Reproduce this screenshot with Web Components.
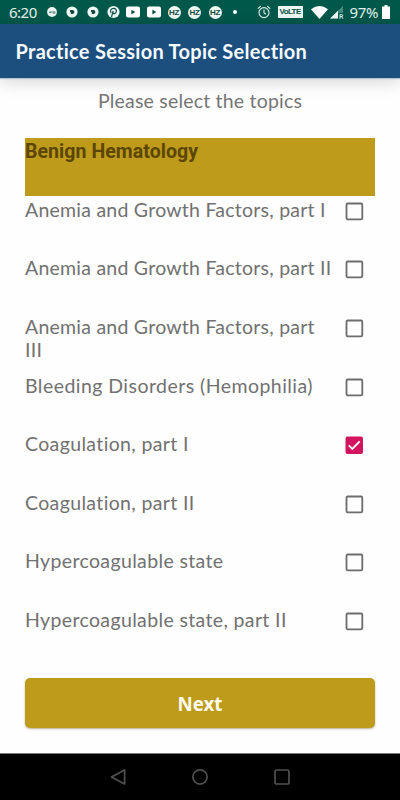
<!DOCTYPE html>
<html lang="en">
<head>
<meta charset="utf-8">
<meta name="viewport" content="width=device-width, initial-scale=1">
<title>Practice Session Topic Selection</title>
<style>
  html, body {
    margin: 0;
    height: 100%;
    overflow: hidden;
    background: #fefefe;
    font-family: Lato, "Noto Sans", sans-serif;
    font-variant-ligatures: none;
  }
</style>
</head>
<body>
<topic-screen></topic-screen>

<script>
class StatusBar extends HTMLElement {
  constructor() {
    super();
    this.attachShadow({ mode: "open" });
    this.render();
  }

  render() {
    const ad = `
      <svg width="12" height="12" viewBox="0 0 12 12">
        <circle cx="6" cy="6" r="5.6" fill="#eef8f5"/>
        <path d="M4 4h2.4a2 2 0 0 1 0 4H4.8V6H4z" fill="#17483f"/>
      </svg>`;
    const tube = `
      <svg width="16" height="12" viewBox="0 0 16 12">
        <rect x="1" y=".5" width="14" height="11" rx="2" fill="#fff"/>
        <path d="M6.4 3.8v4.6L10.3 6z" fill="#0a4f46"/>
      </svg>`;
    const badge = `<span class="badge">HZ</span>`;

    this.shadowRoot.innerHTML = `
      <style>
        :host {
          display: grid;
          grid-template-columns: 37px 20px 20.5px 20px 18.5px 21px 21.5px 20.5px 20.5px 24.5px 10px 1fr;
          align-items: center;
          box-sizing: border-box;
          height: 24px;
          padding-left: 9px;
          background: #00584b;
          color: #e3f2ee;
          font: 15px/24px "Noto Sans", sans-serif;
        }
        svg { display: block; }
        .badge {
          width: 13px;
          height: 13px;
          border-radius: 50%;
          background: #eef8f5;
          color: #164c42;
          font: 700 8px/13px "Liberation Sans", sans-serif;
          text-align: center;
          letter-spacing: -0.4px;
        }
        .clock { font-size: 15px; letter-spacing: -0.5px; margin-top: -1px; }
        .dot { width: 4px; height: 4px; border-radius: 50%; background: #fff; }
        .right { display: flex; align-items: center; justify-content: flex-end; padding-right: 10px; }
        .volte {
          margin: 0 8px 0 7px;
          width: 25px;
          height: 12px;
          background: #eef8f5;
          color: #0a4f46;
          font: 700 8px/12px "Liberation Sans", sans-serif;
          text-align: center;
          letter-spacing: -0.6px;
        }
        .pct { margin: -1px 4px 0 6px; letter-spacing: -0.4px; }
      </style>
      <span class="clock">6:20</span>
      <svg width="12" height="12" viewBox="0 0 12 12">
        <circle cx="6" cy="6" r="4.9" fill="#eef8f5"/>
        <path d="M3 6.4h2M4 5v2.4M6 4.8v2.4M7.3 5.8h1.7v1.4H7.3z" stroke="#47776e" stroke-width=".8" fill="none"/>
      </svg>
      ${ad}${ad}
      <svg width="14" height="14" viewBox="0 0 14 14">
        <circle cx="6.5" cy="7" r="6.1" fill="#eef8f5"/>
        <path d="M4.5 12l1.7-6.2M4.1 8C2.7 5.6 4.1 3.4 6.5 3.4c2.3 0 3.3 1.6 2.8 3.3-.5 2-2.6 2.6-3.4 1.2" fill="none" stroke="#0a4f46" stroke-width="1.2"/>
      </svg>
      ${tube}${tube}${badge}${badge}${badge}
      <span class="dot"></span>
      <span class="right">
        <svg width="14" height="14" viewBox="0 0 14 14" fill="none" stroke="#e3f2ee" stroke-width="1.1">
          <circle cx="7" cy="7.6" r="5"/>
          <path d="M7 4.6v3.3l2.1 1.3M.8 3.7l3-2.5M13.2 3.7l-3-2.5"/>
        </svg>
        <span class="volte">VoLTE</span>
        <svg width="17" height="13" viewBox="0 0 17 13"><path d="M0 3.2Q8.5-3 17 3.2L8.5 13z" fill="#fff"/></svg>
        <svg width="14" height="13" viewBox="0 0 14 13" style="margin-left:2px">
          <path d="M0 12.5L13 0v12.5z" fill="#4d8b81"/>
          <path d="M0 12.5L8 4.8v7.7z" fill="#eef8f5"/>
          <path d="M8.2 6.8H14V13H8.2z" fill="#00584b"/>
          <path d="M10 12.8V8.6h1.8a1 1 0 0 1 0 2H10m1.7 0l1.3 2.2" fill="none" stroke="#e3f2ee"/>
        </svg>
        <span class="pct">97%</span>
        <svg width="8" height="14" viewBox="0 0 8 14"><path d="M2.5 0h3v1.5H8V14H0V1.5h2.5z" fill="#fff"/></svg>
      </span>
    `;
  }
}

class AppBar extends HTMLElement {
  constructor() {
    super();
    this.attachShadow({ mode: "open" });
    this.shadowRoot.innerHTML = `
      <style>
        :host {
          display: flex;
          align-items: center;
          box-sizing: border-box;
          height: 54px;
          padding: 0 0 0 15.5px;
          background: #1c4e7e;
          color: #f6fbff;
          font-weight: 700;
          font-size: 20px;
          line-height: 24px;
          letter-spacing: 0.29px;
          box-shadow: 0 1px 1px #b5c4d1, 0 3px 18px rgba(0, 0, 0, 0.18);
          white-space: nowrap;
        }
      </style>
      <slot></slot>
    `;
  }
}

class TopicHeading extends HTMLElement {
  constructor() {
    super();
    this.attachShadow({ mode: "open" });
    this.shadowRoot.innerHTML = `
      <style>
        :host {
          display: block;
          box-sizing: border-box;
          height: 58px;
          padding-top: 2px;
          background: #be9b1b;
          color: #5b4606;
          font: 700 19.5px/24px Roboto, sans-serif;
          letter-spacing: 0.06px;
        }
      </style>
      <slot></slot>
    `;
  }
}

class TopicRow extends HTMLElement {
  constructor() {
    super();
    this.attachShadow({ mode: "open" });
    this.render();
  }

  render() {
    const box = this.hasAttribute("checked")
      ? `<rect x=".5" y=".5" width="17.5" height="17.5" rx="2" fill="#d3145f"/>
         <path d="M3.8 9.4l3.5 3.5 7.4-7.6" fill="none" stroke="#fff" stroke-width="1.9"/>`
      : `<rect x="1.5" y="1.5" width="15.8" height="15.8" rx="1.3" fill="none" stroke="#6c6c6c" stroke-width="1.8"/>`;

    this.shadowRoot.innerHTML = `
      <style>
        :host {
          display: flex;
          justify-content: space-between;
          align-items: flex-start;
          box-sizing: border-box;
          height: 58.57px;
          padding: 2.4px 11px 0 0;
          color: #717171;
          font-size: 19.5px;
          line-height: 23px;
        }
        .label { width: 308px; letter-spacing: var(--track, 0.36px); }
        svg { flex: none; margin-top: 4px; }
      </style>
      <span class="label"><slot></slot></span>
      <svg width="19" height="19" viewBox="0 0 19 19">${box}</svg>
    `;
  }
}

class NextButton extends HTMLElement {
  constructor() {
    super();
    this.attachShadow({ mode: "open" });
    this.shadowRoot.innerHTML = `
      <style>
        :host { display: block; }
        button {
          display: block;
          width: 100%;
          height: 50px;
          padding: 2px 0 0;
          border: 0;
          border-radius: 5px;
          background: #be9b1b;
          color: #fffdf0;
          font: 700 18.7px/24px "Noto Sans", sans-serif;
          box-shadow: 0 1px 2px rgba(80, 60, 0, 0.4);
        }
      </style>
      <button><slot></slot></button>
    `;
  }
}

class NavBar extends HTMLElement {
  constructor() {
    super();
    this.attachShadow({ mode: "open" });
    this.shadowRoot.innerHTML = `
      <style>
        :host {
          display: flex;
          justify-content: center;
          align-items: center;
          gap: 66px;
          box-sizing: border-box;
          height: 47px;
          border-top: 1px solid #777;
          background: #000;
        }
        svg { fill: none; stroke: #505050; stroke-width: 1.7; }
      </style>
      <svg width="16" height="16" viewBox="0 0 16 16"><path d="M14.6 1v14L1.5 8z" stroke-linejoin="round"/></svg>
      <svg width="16" height="16" viewBox="0 0 16 16"><circle cx="8" cy="8" r="7.1"/></svg>
      <svg width="16" height="16" viewBox="0 0 16 16"><rect x="1" y="1" width="14" height="14" rx="1.7"/></svg>
    `;
  }
}

class TopicScreen extends HTMLElement {
  constructor() {
    super();
    this.attachShadow({ mode: "open" });
    this.shadowRoot.innerHTML = `
      <style>
        :host {
          display: flex;
          flex-direction: column;
          width: 400px;
          height: 800px;
        }
        main { flex: 1; padding: 0 25px; }
        .prompt {
          margin: 11px 0 24.5px;
          text-align: center;
          color: #757575;
          font-size: 19.5px;
          line-height: 24px;
          letter-spacing: 0.2px;
        }
        .growth { --track: 0.24px; }
        .bleeding { --track: 0.45px; }
        next-button { margin-top: 13.5px; }
      </style>
      <status-bar></status-bar>
      <app-bar>Practice Session Topic Selection</app-bar>
      <main>
        <p class="prompt">Please select the topics</p>
        <topic-heading>Benign Hematology</topic-heading>
        <topic-row class="growth">Anemia and Growth Factors, part I</topic-row>
        <topic-row class="growth">Anemia and Growth Factors, part II</topic-row>
        <topic-row class="growth">Anemia and Growth Factors, part III</topic-row>
        <topic-row class="bleeding">Bleeding Disorders (Hemophilia)</topic-row>
        <topic-row checked>Coagulation, part I</topic-row>
        <topic-row>Coagulation, part II</topic-row>
        <topic-row>Hypercoagulable state</topic-row>
        <topic-row>Hypercoagulable state, part II</topic-row>
        <next-button>Next</next-button>
      </main>
      <nav-bar></nav-bar>
    `;
  }
}

customElements.define("status-bar", StatusBar);
customElements.define("app-bar", AppBar);
customElements.define("topic-heading", TopicHeading);
customElements.define("topic-row", TopicRow);
customElements.define("next-button", NextButton);
customElements.define("nav-bar", NavBar);
customElements.define("topic-screen", TopicScreen);
</script>
</body>
</html>
